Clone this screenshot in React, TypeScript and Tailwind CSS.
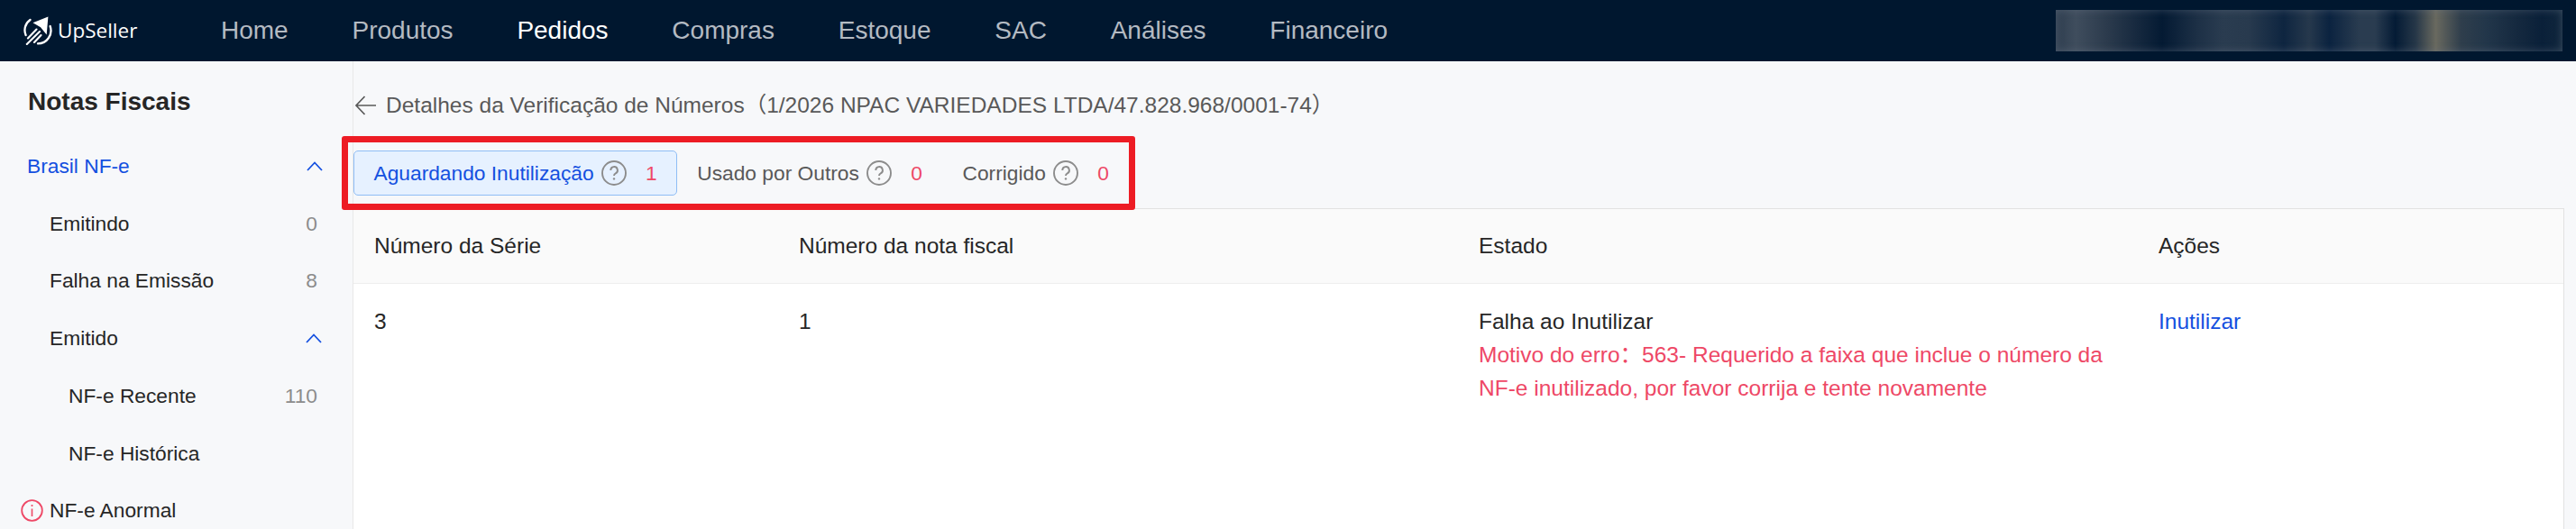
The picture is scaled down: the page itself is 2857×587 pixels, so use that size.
const font = { fontFamily: '"Liberation Sans", Arial, "Noto Sans CJK SC", sans-serif' };

function Logo() {
  return (
    <svg width="32" height="32" viewBox="0 0 32 32" fill="none" className="shrink-0">
      <path d="M7.5 4 A14 14 0 0 0 2.6 21" stroke="white" strokeWidth="2.3" strokeLinecap="round" />
      <path d="M29.6 11 A14.5 14.5 0 0 1 16 30.4" stroke="white" strokeWidth="2.3" strokeLinecap="round" />
      <path d="M10.5 7.2 L27.4 0.6 L25.7 20.6 L19 12.2 Z" fill="white" />
      <path d="M14.5 14.5 L5 24.5 M18 17 L3.8 31 M19.5 21 L12 29" stroke="white" strokeWidth="2.1" strokeLinecap="round" />
    </svg>
  );
}

function Help() {
  return (
    <svg width="28" height="28" viewBox="0 0 28 28" fill="none" className="shrink-0">
      <circle cx="14" cy="14" r="13" stroke="#8c8c8c" strokeWidth="1.9" />
      <path d="M10.3 11 A3.8 3.8 0 1 1 15.8 14.3 C14.4 15 14 15.6 14 17" stroke="#8c8c8c" strokeWidth="1.9" />
      <circle cx="14" cy="20.4" r="1.2" fill="#8c8c8c" />
    </svg>
  );
}

function Chevron() {
  return (
    <svg width="18" height="11" viewBox="0 0 18 11" fill="none" className="shrink-0">
      <path d="M1 10 L9 1.5 L17 10" stroke="#1450e0" strokeWidth="1.8" />
    </svg>
  );
}

function SideRow({ label, count, indent, chevron, info }: { label: string; count?: string; indent: string; chevron?: boolean; info?: boolean }) {
  return (
    <div className={`flex h-[63.7px] items-center justify-between pr-[39px] ${indent}`}>
      <span className="flex items-center text-[#262626]">
        {info && (
          <svg width="25" height="25" viewBox="0 0 25 25" fill="none" className="-ml-[32px] mr-[7px] shrink-0">
            <circle cx="12.5" cy="12.5" r="11.3" stroke="#ee4866" strokeWidth="1.8" />
            <path d="M12.5 10.5 V19" stroke="#ee4866" strokeWidth="1.6" />
            <circle cx="12.5" cy="7" r="1.1" fill="#ee4866" />
          </svg>
        )}
        {label}
      </span>
      {count && <span className="text-[#8c8c8c]">{count}</span>}
      {chevron && <span className="-mr-[5px]"><Chevron /></span>}
    </div>
  );
}

function Tab({ label, count, active }: { label: string; count: string; active?: boolean }) {
  return (
    <div className={`flex h-[50px] items-center rounded-[5px] border pr-[21px] pl-[21.5px] ${active ? 'border-[#8fbdf5] bg-[#e6f1ff] text-[#1450e0]' : 'border-transparent text-[#595959]'}`}>
      <span>{label}</span>
      <span className="ml-[8px]"><Help /></span>
      <span className="ml-[21.5px] text-[#ee4866]">{count}</span>
    </div>
  );
}

const cols = 'grid grid-cols-[471px_754px_754px_473px]';

export default function App() {
  return (
    <div style={font} className="relative h-[587px] w-[2857px] overflow-hidden bg-[#f7f8fa] text-[22.75px] text-[#262626]">
      <header className="flex h-[68px] items-center bg-[#00172f]">
        <div className="flex w-[245px] items-center pl-[26px]">
          <Logo />
          <span style={{ fontFamily: '"Open Sans", sans-serif' }} className="ml-[6px] text-[22.5px] font-medium text-white">UpSeller</span>
        </div>
        <nav className="flex gap-[70.8px] text-[28px] text-[#b4bac2]">
          <span>Home</span>
          <span>Produtos</span>
          <span className="text-white">Pedidos</span>
          <span>Compras</span>
          <span>Estoque</span>
          <span>SAC</span>
          <span>Análises</span>
          <span>Financeiro</span>
        </nav>
        <div className="ml-auto mr-[15px] h-[46px] w-[562px] bg-[linear-gradient(90deg,#2f3e50_0%,#3f4d5d_4%,#2c3b4d_10%,#041a33_21%,#1d3046_28%,#2a3c50_33%,#283a4e_38%,#0e2540_45%,#26384c_50%,#0b2340_54%,#2a3c50_60%,#2a3c50_63%,#041b35_67%,#263748_71%,#69695f_75%,#2f3e4c_80%,#22364a_85%,#15293f_91%,#0a2039_96%,#11273d_100%)] shadow-[inset_0_0_9px_rgba(110,125,140,0.45)]" />
      </header>
      <div className="flex h-[519px]">
        <aside className="w-[392px] shrink-0 border-r border-[#e8e8e8] pt-[26px]">
          <div className="pl-[31px] text-[28px] leading-[38px] font-bold text-[#262626]">Notas Fiscais</div>
          <div className="mt-[20px] flex h-[64px] items-center justify-between pr-[33px] pl-[30px] text-[#1450e0]">
            <span>Brasil NF-e</span>
            <Chevron />
          </div>
          <SideRow label="Emitindo" count="0" indent="pl-[55px]" />
          <SideRow label="Falha na Emissão" count="8" indent="pl-[55px]" />
          <SideRow label="Emitido" chevron indent="pl-[55px]" />
          <SideRow label="NF-e Recente" count="110" indent="pl-[76px]" />
          <SideRow label="NF-e Histórica" indent="pl-[76px]" />
          <SideRow label="NF-e Anormal" info indent="pl-[55px]" />
        </aside>
        <main className="min-w-0 flex-1">
          <div className="flex h-[64px] items-center pt-[34px] text-[24.5px] text-[#595959]">
            <svg width="26" height="24" viewBox="0 0 26 24" fill="none" className="ml-[1px] shrink-0">
              <path d="M24 12 H2 M11.5 2 L2 12 L11.5 22" stroke="#595959" strokeWidth="1.7" />
            </svg>
            <span className="ml-[9px]">Detalhes da Verificação de Números（1/2026 NPAC VARIEDADES LTDA/47.828.968/0001-74）</span>
          </div>
          <div className="flex pt-[35px]">
            <Tab label="Aguardando Inutilização" count="1" active />
            <Tab label="Usado por Outros" count="0" />
            <Tab label="Corrigido" count="0" />
          </div>
          <section className="mt-[14px] mr-[13px] h-[356px] border-t border-r border-[#e2e2e2] bg-white text-[24.5px]">
            <div className={`${cols} h-[83px] items-center border-b border-[#eeeeee] bg-[#fafafa] [&>div]:px-[23px]`}>
              <div>Número da Série</div>
              <div>Número da nota fiscal</div>
              <div>Estado</div>
              <div>Ações</div>
            </div>
            <div className={`${cols} pt-[23px] [&>div]:px-[23px]`}>
              <div className="leading-[37px]">3</div>
              <div className="leading-[37px]">1</div>
              <div className="leading-[37px]">
                <div>Falha ao Inutilizar</div>
                <div className="text-[#ee4866]">Motivo do erro：563- Requerido a faixa que inclue o número da NF-e inutilizado, por favor corrija e tente novamente</div>
              </div>
              <div className="leading-[37px] text-[#1450e0]">Inutilizar</div>
            </div>
          </section>
        </main>
      </div>
      <div className="pointer-events-none absolute top-[151px] left-[379px] h-[82px] w-[880px] rounded-[3px] border-[7px] border-[#ed1c24]" />
    </div>
  );
}
